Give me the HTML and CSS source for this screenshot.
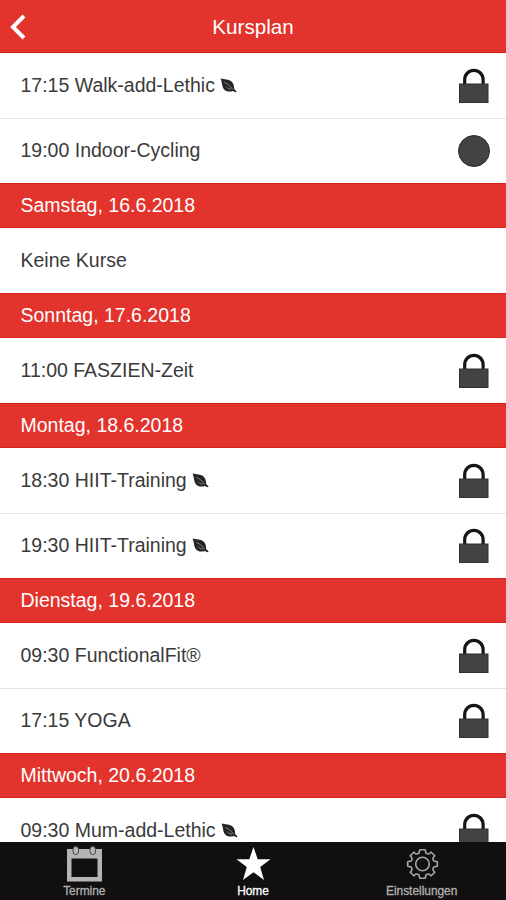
FILE: index.html
```html
<!DOCTYPE html>
<html lang="de">
<head>
    <meta charset="UTF-8">
    <meta name="viewport" content="width=device-width, initial-scale=1.0">
    <title>Kursplan</title>
    <link rel="stylesheet" href="styles.css">
</head>
<body>
    <!-- shared icons -->
    <svg class="symbols" width="0" height="0">
        <symbol id="lock" viewBox="0 0 30 36">
            <path d="M5.700 17V11.500a9.200 9.200 0 0 1 18.400 0V17" fill="none" stroke="#151515" stroke-width="3.200"/>
            <rect x="0.500" y="16" width="28.500" height="18.500" fill="#434343" stroke="#303030"/>
        </symbol>
        <symbol id="leaf" viewBox="0 0 17 15">
            <path d="M0.500 0.500C4 1.600 9 0.800 11.800 3.700C14 6 14 8.500 14.200 11L16.700 13.700L15.500 14.200L12.800 13C9.500 14.300 5.500 13.500 3.500 10.700C1.500 7.700 2.300 3.500 0.500 0.500Z" fill="#252525"/>
            <path d="M4.300 4.500C7.500 5.500 10.500 8 12.700 11.500M6.500 9C8 10.500 9.500 11 11 11.200" fill="none" stroke="#999" stroke-width="0.800"/>
        </symbol>
    </svg>

    <div class="app">
        <header class="header">
            <svg class="back" width="16" height="26" viewBox="0 0 16 26"><path d="M14 2L3 13L14 24" fill="none" stroke="#fff" stroke-width="4"/></svg>
            <h1>Kursplan</h1>
        </header>

        <main class="list">
            <div class="row"><span>17:15 Walk-add-Lethic</span><svg class="leaf"><use href="#leaf"/></svg><svg class="lock"><use href="#lock"/></svg></div>
            <div class="row"><span>19:00 Indoor-Cycling</span><i class="dot"></i></div>

            <h2>Samstag, 16.6.2018</h2>
            <div class="row"><span>Keine Kurse</span></div>

            <h2>Sonntag, 17.6.2018</h2>
            <div class="row"><span>11:00 FASZIEN-Zeit</span><svg class="lock"><use href="#lock"/></svg></div>

            <h2>Montag, 18.6.2018</h2>
            <div class="row"><span>18:30 HIIT-Training</span><svg class="leaf"><use href="#leaf"/></svg><svg class="lock"><use href="#lock"/></svg></div>
            <div class="row"><span>19:30 HIIT-Training</span><svg class="leaf"><use href="#leaf"/></svg><svg class="lock"><use href="#lock"/></svg></div>

            <h2>Dienstag, 19.6.2018</h2>
            <div class="row"><span>09:30 FunctionalFit®</span><svg class="lock"><use href="#lock"/></svg></div>
            <div class="row"><span>17:15 YOGA</span><svg class="lock"><use href="#lock"/></svg></div>

            <h2>Mittwoch, 20.6.2018</h2>
            <div class="row"><span>09:30 Mum-add-Lethic</span><svg class="leaf"><use href="#leaf"/></svg><svg class="lock"><use href="#lock"/></svg></div>
        </main>

        <nav class="tabs">
            <a class="tab">
                <svg width="36" height="36" viewBox="0 0 36 36">
                    <path d="M1 3H36V35.500H1ZM5.500 12.500V31H31.500V12.500Z" fill="#b5b5b5" fill-rule="evenodd"/>
                    <rect x="7" y="0.500" width="5.500" height="8" rx="2.700" fill="#b5b5b5" stroke="#444"/>
                    <rect x="24" y="0.500" width="5.500" height="8" rx="2.700" fill="#b5b5b5" stroke="#444"/>
                </svg>
                <span>Termine</span>
            </a>
            <a class="tab active">
                <svg width="36" height="36" viewBox="0 0 36 36"><path d="M18.500 1L22.700 13.300H35.500L25.200 21L29 34L18.500 26.200L8 34L11.800 21L1.500 13.300H14.300Z" fill="#fff"/></svg>
                <span>Home</span>
            </a>
            <a class="tab">
                <svg width="36" height="36" viewBox="0 0 36 36" fill="none" stroke="#a5a5a5" stroke-width="1.600" stroke-linejoin="round">
                    <path d="M15.800 3.700H21.200L22 7.200Q23.500 8.200 25 8L27.200 6.200L30.800 9.800L29 12Q28.800 13.500 29.800 15L33.300 15.800V20.200L29.800 21Q28.800 22.500 29 24L30.800 26.200L27.200 29.800L25 28Q23.500 27.800 22 28.800L21.200 32.300H15.800L15 28.800Q13.500 27.800 12 28L9.800 29.800L6.200 26.200L8 24Q8.200 22.500 7.200 21L3.700 20.200V15.800L7.200 15Q8.200 13.500 8 12L6.200 9.800L9.800 6.200L12 8Q13.500 8.200 15 7.200Z"/>
                    <circle cx="18.500" cy="18" r="6.800"/>
                </svg>
                <span>Einstellungen</span>
            </a>
        </nav>
    </div>
</body>
</html>
```
FILE: styles.css
```css
* {
    box-sizing: border-box;
}

body {
    margin: 0;
    font-family: "Liberation Sans", Arial, sans-serif;
    font-size: 19.5px;
    color: #3a3a3a;
    background: #fff;
}

.symbols {
    position: absolute;
}

.app {
    display: flex;
    flex-direction: column;
    height: 900px;
    overflow: hidden;
}

.header {
    display: grid;
    grid-template-columns: 30px 1fr 30px;
    align-items: center;
    flex: none;
    height: 53px;
    background: #e2332d;
    border-bottom: 1px solid #d9211b;
    color: #fff;
}

.back {
    margin: 2px 0 0 10px;
}

.header h1 {
    margin: 2px 0 0;
    font-size: 20.6px;
    font-weight: normal;
    text-align: center;
}

.list {
    flex: 1;
    min-height: 0;
    overflow: hidden;
}

.list h2 {
    height: 45px;
    margin: 0;
    padding-left: 20.5px;
    font-size: 19.5px;
    font-weight: normal;
    line-height: 43px;
    color: #fff;
    background: #e2332d;
    border-top: 1px solid #d9211b;
    border-bottom: 1px solid #d9211b;
}

.row {
    display: flex;
    align-items: center;
    height: 65px;
    padding: 0 17px 0 20.5px;
}

.row + .row {
    box-shadow: inset 0 1px #e2e2e2;
}

.leaf {
    width: 17px;
    height: 15px;
    margin-left: 5px;
}

.lock {
    width: 30px;
    height: 36px;
    margin-left: auto;
}

.dot {
    width: 32px;
    height: 32px;
    margin: 0 -1px 0 auto;
    border: 1px solid #2b2b2b;
    border-radius: 50%;
    background: #434343;
}

.tabs {
    display: grid;
    grid-template-columns: repeat(3, 1fr);
    flex: none;
    height: 58px;
    background: #120f10;
}

.tab {
    display: flex;
    flex-direction: column;
    align-items: center;
    padding-top: 4px;
    font-size: 11.9px;
    line-height: 13px;
    color: #b0b0b0;
    -webkit-text-stroke: 0.3px;
}

.tab span {
    margin-top: 3px;
}

.active {
    color: #fff;
}
```
